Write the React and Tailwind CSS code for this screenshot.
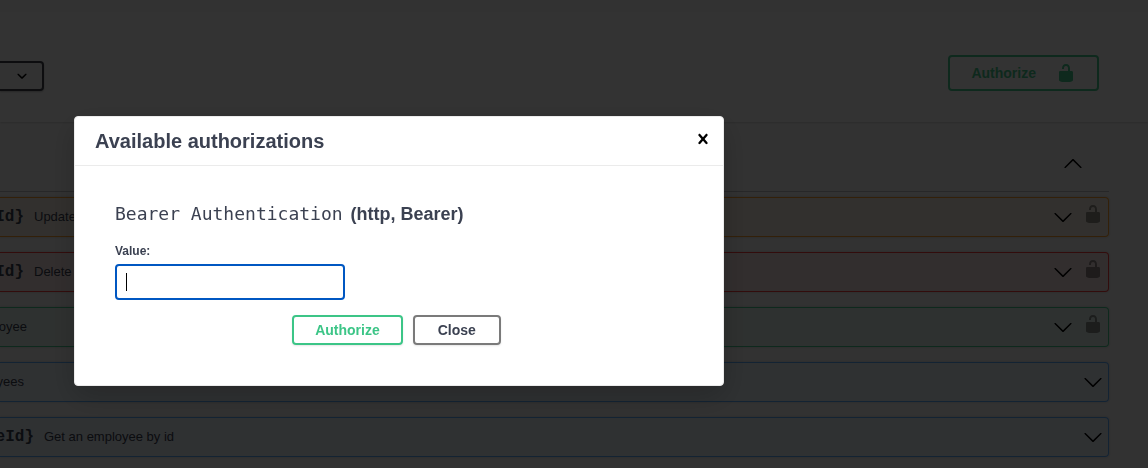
const ARROW_DOWN =
  'M17.418 6.109c.272-.268.709-.268.979 0s.271.701 0 .969l-7.908 7.83c-.27.268-.707.268-.979 0l-7.908-7.83c-.27-.268-.27-.701 0-.969.271-.268.709-.268.979 0L10 13.25l7.418-7.141z';
const ARROW_UP =
  'M17.418 14.908c.272.268.709.268.979 0s.271-.701 0-.969l-7.908-7.83c-.27-.268-.707-.268-.979 0l-7.908 7.83c-.27.268-.27.701 0 .969.271.268.709.268.979 0L10 7.767l7.418 7.141z';
const CARET =
  'M13.418 7.859c.271-.268.709-.268.978 0 .27.268.272.701 0 .969l-3.908 3.83c-.27.268-.707.268-.979 0l-3.908-3.83c-.27-.267-.27-.701 0-.969.271-.268.709-.268.978 0L10 11l3.418-3.141z';
const UNLOCKED =
  'M15.8 8H14V5.6C14 2.703 12.665 1 10 1 7.334 1 6 2.703 6 5.6V6h2v-.801C8 3.754 8.797 3 10 3c1.203 0 2 .754 2 2.199V8H4c-.553 0-1 .646-1 1.199V17c0 .549.428 1.139.951 1.307l1.197.387C5.672 18.861 6.55 19 7.1 19h5.8c.549 0 1.428-.139 1.951-.307l1.196-.387c.524-.167.953-.757.953-1.306V9.199C17 8.646 16.352 8 15.8 8z';
const CLOSE =
  'M14.348 14.849c-.469.469-1.229.469-1.697 0L10 11.819l-2.651 3.029c-.469.469-1.229.469-1.697 0-.469-.469-.469-1.229 0-1.697l2.758-3.15-2.759-3.152c-.469-.469-.469-1.228 0-1.697.469-.469 1.228-.469 1.697 0L10 8.183l2.651-3.031c.469-.469 1.228-.469 1.697 0 .469.469.469 1.229 0 1.697l-2.758 3.152 2.758 3.15c.469.469.469 1.229 0 1.698z';

function Icon({ d, className = '' }) {
  return (
    <svg viewBox="0 0 20 20" fill="currentColor" aria-hidden="true" className={`size-5 shrink-0 ${className}`}>
      <path d={d} />
    </svg>
  );
}

const OPERATIONS = [
  { path: 'Id}', pathWidth: 'w-6', summary: 'Update', locked: true, tone: 'border-[#fca130] bg-[#fca130]/10' },
  { path: 'Id}', pathWidth: 'w-6', summary: 'Delete', locked: true, tone: 'border-[#f93e3e] bg-[#f93e3e]/10' },
  { tail: 'oyee', tailWidth: 'w-[27px]', locked: true, tone: 'border-[#49cc90] bg-[#49cc90]/10' },
  { tail: 'yees', tailWidth: 'w-6', tone: 'border-[#61affe] bg-[#61affe]/10' },
  { path: 'eId}', pathWidth: 'w-[34px]', summary: 'Get an employee by id', tone: 'border-[#61affe] bg-[#61affe]/10' },
];

function Operation({ op }) {
  return (
    <li className={`flex h-10 items-center rounded-r border-y border-r pr-[5px] shadow-[0_0_3px_rgba(0,0,0,0.19)] ${op.tone}`}>
      {op.path && (
        <span className={`flex justify-end overflow-hidden font-['Liberation_Mono',monospace] text-base font-bold ${op.pathWidth}`}>
          {op.path}
        </span>
      )}
      {op.summary && <span className="ml-2.5 text-[13px]">{op.summary}</span>}
      {op.tail && <span className={`flex justify-end overflow-hidden text-[13px] ${op.tailWidth}`}>{op.tail}</span>}
      <button type="button" aria-label="Expand operation" className="ml-auto text-black">
        <Icon d={ARROW_DOWN} />
      </button>
      {op.locked && (
        <button type="button" aria-label="Authorization button unlocked" className="ml-2.5 pb-1.5 text-black opacity-40">
          <Icon d={UNLOCKED} />
        </button>
      )}
    </li>
  );
}

function Modal() {
  return (
    <div className="fixed inset-0 bg-black/80 pt-[116px] pr-4 pl-[74px]">
      <section
        role="dialog"
        aria-labelledby="auth-title"
        className="w-full max-w-[650px] rounded border border-[#ebebeb] bg-white shadow-[0_10px_30px_rgba(0,0,0,0.2)]"
      >
        <header className="flex h-[49px] items-center justify-between border-b border-[#ebebeb] px-5">
          <h3 id="auth-title" className="text-xl font-bold">
            Available authorizations
          </h3>
          <button type="button" aria-label="Close dialog" className="-mr-2.5 pb-1 text-black">
            <Icon d={CLOSE} />
          </button>
        </header>
        <form className="px-10 pt-9 pb-10" onSubmit={(e) => e.preventDefault()}>
          <h4 className="flex items-baseline gap-2 text-lg leading-6 font-bold">
            <span className="font-['DejaVu_Sans_Mono',monospace] font-normal">Bearer Authentication</span>
            <span>(http, Bearer)</span>
          </h4>
          <label htmlFor="auth-value" className="mt-[17px] block text-xs leading-4 font-bold">
            Value:
          </label>
          <div className="relative mt-[5px] w-[230px]">
            <input
              id="auth-value"
              type="text"
              className="block h-9 w-full rounded border-2 border-[#0057c2] bg-white px-2.5 text-sm caret-transparent outline-none"
            />
            <span className="absolute top-[9px] left-[11px] h-[18px] w-px bg-black" />
          </div>
          <div className="mt-[15px] flex justify-center gap-2.5 pr-[5px]">
            <button
              type="submit"
              className="h-[30px] rounded border-2 border-[#3cc587] px-[21px] text-sm leading-none font-bold text-[#3cc587] shadow-[0_1px_2px_rgba(0,0,0,0.1)]"
            >
              Authorize
            </button>
            <button
              type="button"
              className="h-[30px] rounded border-2 border-[#7a7a7a] px-[23px] text-sm leading-none font-bold shadow-[0_1px_2px_rgba(0,0,0,0.1)]"
            >
              Close
            </button>
          </div>
        </form>
      </section>
    </div>
  );
}

export default function App() {
  return (
    <div className="h-screen overflow-hidden bg-[#fafafa] font-['Liberation_Sans',Arial,sans-serif] text-[#3b4151]">
      <div className="mt-3 flex h-[110px] items-center justify-between bg-white pr-[49px] shadow-[0_1px_2px_rgba(0,0,0,0.15)]">
        <button
          type="button"
          aria-label="Servers"
          className="mt-[18px] flex h-[30px] w-11 items-center justify-end rounded-r border-y-2 border-r-2 border-[#41444e] bg-[#f7f7f7] pr-2.5 text-black shadow-[0_1px_2px_rgba(0,0,0,0.25)]"
        >
          <Icon d={CARET} />
        </button>
        <button
          type="button"
          className="mt-3 flex h-9 items-center gap-5 rounded border-2 border-[#49cc90] px-[21px] text-sm font-bold text-[#49cc90]"
        >
          Authorize
          <Icon d={UNLOCKED} />
        </button>
      </div>
      <main className="pr-[39px]">
        <div className="flex h-[70px] items-center justify-end border-b border-[#3b4151]/30 pt-3 pr-[26px]">
          <button type="button" aria-label="Collapse section" className="text-black">
            <Icon d={ARROW_UP} />
          </button>
        </div>
        <ul className="flex flex-col gap-[15px] pt-[5px]">
          {OPERATIONS.map((op, i) => (
            <Operation key={i} op={op} />
          ))}
        </ul>
      </main>
      <Modal />
    </div>
  );
}
